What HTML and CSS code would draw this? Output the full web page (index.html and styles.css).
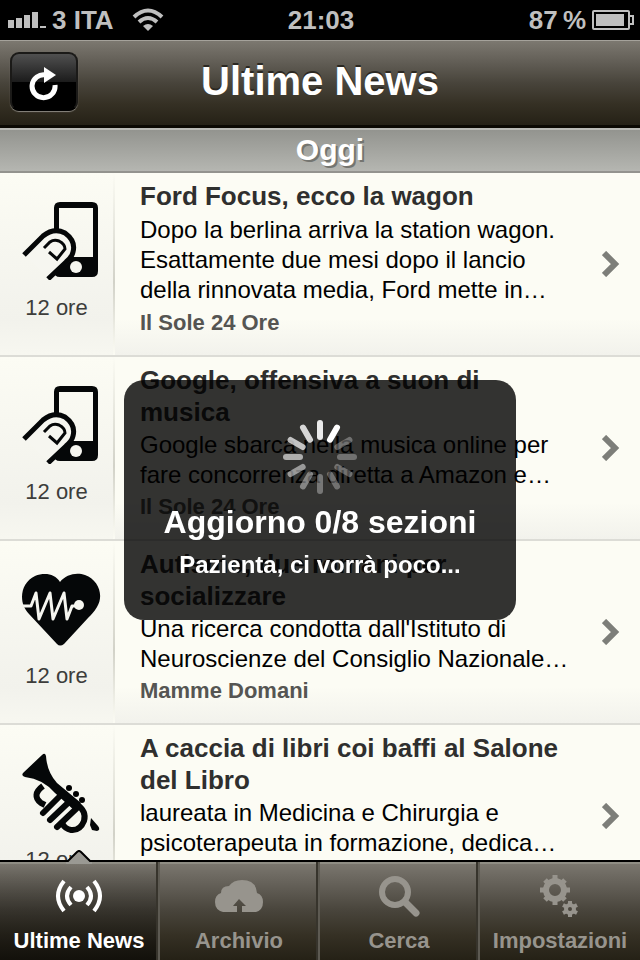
FILE: index.html
```html
<!DOCTYPE html>
<html lang="it">
<head>
    <meta charset="UTF-8">
    <meta name="viewport" content="width=device-width, initial-scale=1.0">
    <title>Ultime News</title>
    <link rel="stylesheet" href="styles.css">
</head>
<body>
    <div class="status-bar">
        <div class="status-left">
            <svg width="38" height="16" viewBox="0 0 38 16" fill="#bfbfbf"><path d="M0 8h6v8H0zM8 6h6v10H8zM16 3h6v13h-6zM24 0h6v16h-6zM32 14h6v2h-6z"/></svg>
            <span class="carrier">3 ITA</span>
            <svg width="32" height="24" viewBox="0 0 32 24" fill="none" stroke="#bfbfbf" stroke-width="4"><path d="M2 9q14-13 28 0M7 14q9-8 18 0"/><path d="M16 23l-5-5q5-4 10 0z" fill="#bfbfbf" stroke="none"/></svg>
        </div>
        <div class="clock">21:03</div>
        <div class="status-right">
            <span>87&thinsp;%</span>
            <svg width="42" height="20" viewBox="0 0 42 20"><rect x="1" y="1" width="36" height="18" rx="1" fill="none" stroke="#bfbfbf" stroke-width="2"/><path d="M4 4h28v12H4z" fill="#bfbfbf"/><path d="M38 6h3v8h-3" fill="none" stroke="#bfbfbf" stroke-width="2"/></svg>
        </div>
    </div>

    <header class="nav-bar">
        <button class="refresh" aria-label="Aggiorna">
            <svg width="30" height="34" viewBox="0 0 30 34"><path d="M17 8A11.500 11.500 0 1 0 26 18" fill="none" stroke="#fff" stroke-width="5"/><path d="M15 0l12 8-12 8z" fill="#fff"/></svg>
        </button>
        <h1>Ultime News</h1>
    </header>

    <h2 class="day">Oggi</h2>

    <main class="news">
        <article class="item">
            <div class="side">
                <svg width="80" height="80" viewBox="0 0 80 80"><use href="#touch"/></svg>
                <span>12 ore</span>
            </div>
            <div class="text">
                <h3>Ford Focus, ecco la wagon</h3>
                <p>Dopo la berlina arriva la station wagon.<br>Esattamente due mesi dopo il lancio<br>della rinnovata media, Ford mette in…</p>
                <div class="source">Il Sole 24 Ore</div>
            </div>
            <svg class="arrow" width="18" height="26" viewBox="0 0 18 26"><path d="M2 2l11 11L2 24"/></svg>
        </article>
        <article class="item">
            <div class="side">
                <svg width="80" height="80" viewBox="0 0 80 80"><use href="#touch"/></svg>
                <span>12 ore</span>
            </div>
            <div class="text">
                <h3>Google, offensiva a suon di<br>musica</h3>
                <p>Google sbarca nella musica online per<br>fare concorrenza diretta a Amazon e…</p>
                <div class="source">Il Sole 24 Ore</div>
            </div>
            <svg class="arrow" width="18" height="26" viewBox="0 0 18 26"><path d="M2 2l11 11L2 24"/></svg>
        </article>
        <article class="item">
            <div class="side">
                <svg width="80" height="80" viewBox="0 0 80 80">
                    <path d="M39 14C45 6 56 4 64 7C78 12 83 28 76 39C73 44 70 47 67 50L43 76Q39 79 36 76L8 46C-3 35-1 15 14 8C24 4 34 6 39 14z" fill="#050708"/>
                    <path d="M1 38h9l5-13 3 26 11-26 3 26 11-26 3 26 5-13h7" fill="none" stroke="#f6f6f0" stroke-width="3" stroke-linejoin="round"/>
                    <circle cx="58" cy="37" r="5" fill="#f6f6f0"/>
                </svg>
                <span>12 ore</span>
            </div>
            <div class="text">
                <h3>Autismo, due romani per<br>socializzare</h3>
                <p>Una ricerca condotta dall'Istituto di<br>Neuroscienze del Consiglio Nazionale…</p>
                <div class="source">Mamme Domani</div>
            </div>
            <svg class="arrow" width="18" height="26" viewBox="0 0 18 26"><path d="M2 2l11 11L2 24"/></svg>
        </article>
        <article class="item">
            <div class="side">
                <svg width="80" height="84" viewBox="0 0 80 84" class="tall">
                    <path d="M21 3Q24 0 25 4Q26 20 36 31L60 51L54 59L34 41Q22 27 4 25Q0 24 2 21z" fill="#050708"/>
                    <g fill="none" stroke="#050708" stroke-width="6">
                        <path d="M22 34Q10 43 20 51L24 53"/>
                        <path d="M22 61L41 42M29 68L48 50M36 75L56 56" stroke-linecap="round"/>
                        <path d="M55 52Q66 59 63 69Q59 79 50 78Q44 77 41 71"/>
                    </g>
                    <path d="M70 66L77 74Q80 78 76 79L71 78L69 73z" fill="#050708"/>
                    <circle cx="48" cy="36" r="3"/><circle cx="55" cy="42" r="3"/><circle cx="61" cy="48" r="3"/>
                </svg>
                <span>12 ore</span>
            </div>
            <div class="text">
                <h3>A caccia di libri coi baffi al Salone<br>del Libro</h3>
                <p>laureata in Medicina e Chirurgia e<br>psicoterapeuta in formazione, dedica…</p>
                <div class="source">Mamme Domani</div>
            </div>
            <svg class="arrow" width="18" height="26" viewBox="0 0 18 26"><path d="M2 2l11 11L2 24"/></svg>
        </article>
    </main>

    <nav class="tab-bar">
        <a href="#" class="tab active">
            <svg class="notch" width="26" height="14" viewBox="0 0 26 14"><path d="M0 14V12L11 2q2-1 4 0L26 12v2z" fill="#9a9993"/><path d="M0 11h2L11 2q2-2 4 0l9 9h2" fill="none" stroke="#000" stroke-width="2"/></svg>
            <svg width="48" height="42" viewBox="0 0 48 42" fill="none" stroke="#fff" stroke-width="4"><circle cx="24" cy="21" r="6" fill="#fff" stroke="none"/><path d="M16 12q-8 9 0 18M32 12q8 9 0 18M9 6q-12 15 0 30M39 6q12 15 0 30"/></svg>
            <span>Ultime News</span>
        </a>
        <a href="#" class="tab">
            <svg width="48" height="42" viewBox="0 0 48 42" fill="#97948d"><path d="M8 37Q0 35 0 27Q0 20 6 18Q6 11 14 11Q18 5 27 5Q41 5 42 18Q48 20 48 27Q48 35 41 37H27V31H31L24 24L18 31H22V37z"/></svg>
            <span>Archivio</span>
        </a>
        <a href="#" class="tab">
            <svg width="48" height="42" viewBox="0 0 48 42" fill="none" stroke="#97948d"><circle cx="20" cy="17" r="13" stroke-width="6"/><path d="M30 27l11 11" stroke-width="7" stroke-linecap="round"/></svg>
            <span>Cerca</span>
        </a>
        <a href="#" class="tab">
            <svg width="48" height="42" viewBox="0 0 48 42" fill="none" stroke="#97948d">
                <circle cx="19" cy="15" r="9" stroke-width="6"/><path d="M19 0v6M19 24v6M4 15h6M28 15h6M9 5l4 4M25 21l4 4M29 5l-4 4M13 21l-4 4" stroke-width="5"/>
                <circle cx="34" cy="34" r="4" stroke-width="4"/><path d="M34 26v4M34 38v4M27 30l4 2M37 36l4 2M41 30l-4 2M31 36l-4 2" stroke-width="4"/>
            </svg>
            <span>Impostazioni</span>
        </a>
    </nav>

    <div class="overlay">
        <div class="hud" role="status">
            <svg width="76" height="76" viewBox="-38 -38 76 76" stroke="#fff" stroke-width="6" stroke-linecap="round">
                <path d="M0-20v-14" opacity=".9"/>
                <path d="M0-20v-14" transform="rotate(30)"/>
                <path d="M0-20v-14" transform="rotate(60)" opacity=".3"/>
                <path d="M0-20v-14" transform="rotate(90)" opacity=".3"/>
                <path d="M0-20v-14" transform="rotate(120)" opacity=".3"/>
                <path d="M0-20v-14" transform="rotate(150)" opacity=".3"/>
                <path d="M0-20v-14" transform="rotate(180)" opacity=".33"/>
                <path d="M0-20v-14" transform="rotate(210)" opacity=".4"/>
                <path d="M0-20v-14" transform="rotate(240)" opacity=".5"/>
                <path d="M0-20v-14" transform="rotate(270)" opacity=".6"/>
                <path d="M0-20v-14" transform="rotate(300)" opacity=".7"/>
                <path d="M0-20v-14" transform="rotate(330)" opacity=".8"/>
            </svg>
            <strong>Aggiorno 0/8 sezioni</strong>
            <small>Pazienta, ci vorrà poco...</small>
        </div>
    </div>

    <svg width="0" height="0" class="defs">
        <symbol id="touch" viewBox="0 0 80 80">
            <path d="M39 2h32q6 0 6 6v63q0 6-6 6H39q-6 0-6-6V8q0-6 6-6zM38 8v49h34V8z" fill="#050708" fill-rule="evenodd"/>
            <path d="M3 55L22 36Q33 26 44 33Q56 42 53 54L49 61L28 79z" fill="#f6f6f0"/>
            <circle cx="55" cy="67" r="6" fill="#f6f6f0"/>
            <path d="M3 55L22 36Q33 27 44 33Q55 41 52 52Q51 57 45 62L27 79" fill="none" stroke="#050708" stroke-width="5"/>
            <path d="M23 48l6-6q4-3 9-1 6 3 6 8l-8 10-8-7" fill="none" stroke="#050708" stroke-width="3"/>
        </symbol>
    </svg>
</body>
</html>
```
FILE: styles.css
```css
* {
    box-sizing: border-box;
}
body {
    font-family: "Liberation Sans", Arial, sans-serif;
    margin: 0;
    height: 100vh;
    display: flex;
    flex-direction: column;
    overflow: hidden;
    background: #fcfcf4;
}
h1, h2, h3, p {
    margin: 0;
}
.status-bar {
    flex: none;
    display: grid;
    grid-template-columns: 1fr auto 1fr;
    align-items: center;
    height: 40px;
    padding: 0 6px 0 8px;
    background: #000;
    color: #bfbfbf;
    font-size: 26px;
    font-weight: bold;
}
.status-left, .status-right {
    display: flex;
    align-items: center;
    gap: 6px;
}
.status-right {
    justify-content: flex-end;
}
.carrier {
    margin-right: 12px;
}
.nav-bar {
    flex: none;
    display: grid;
    grid-template-columns: 68px 1fr 68px;
    align-items: center;
    height: 88px;
    padding: 0 10px 4px;
    background: linear-gradient(#7c7870, #625e56 25%, #48443b 50%, #353024 75%, #252116);
    border-top: 1px solid #a5a29b;
    border-bottom: 3px solid #0b0903;
}
.nav-bar h1 {
    text-align: center;
    font-size: 40px;
    line-height: 48px;
    color: #fff;
    text-shadow: 0 -2px 0 #2b2822;
}
.refresh {
    display: flex;
    align-items: center;
    justify-content: center;
    height: 59px;
    padding: 6px 0 0;
    border: 2px solid #1b1a18;
    border-bottom-color: #000;
    border-radius: 9px;
    background: linear-gradient(#505050, #1c1c1c 50%, #000 50%);
    box-shadow: 0 1px 1px #8b8881;
}
.day {
    flex: none;
    height: 45px;
    padding-left: 20px;
    line-height: 40px;
    text-align: center;
    font-size: 30px;
    color: #fff;
    text-shadow: 2px 2px 0 #747570;
    background: linear-gradient(#93948f, #b5b6b1);
    border-top: 2px solid #b9bab5;
    border-bottom: 2px solid #93938e;
}
.news {
    flex: 1;
    min-height: 0;
    overflow: hidden;
}
.item {
    display: flex;
    height: 184px;
    border-bottom: 2px solid #dcdcd6;
    background: linear-gradient(#fcfcf4 80%, #f2f2ec);
}
.side {
    flex: none;
    width: 115px;
    padding-top: 27px;
    display: flex;
    flex-direction: column;
    align-items: center;
    gap: 14px;
    font-size: 22px;
    line-height: 28px;
    color: #3d3d3b;
    background: linear-gradient(#fcfcf4, #f2f2ec 80%, #f7f7f0);
    border-right: 2px solid;
    border-image: linear-gradient(#fcfcf4, #d2d2c8 60%, #fcfcf4) 1;
}
.side svg {
    flex: none;
    margin-left: 8px;
}
.side .tall {
    margin-bottom: -4px;
}
.text {
    flex: 1;
    min-width: 0;
    display: flex;
    flex-direction: column;
    justify-content: space-between;
    padding: 7px 0 17px 25px;
    white-space: nowrap;
}
.text h3 {
    font-size: 26px;
    line-height: 32px;
    color: #2f2f2e;
}
.text p {
    font-size: 24px;
    line-height: 30px;
    color: #000;
}
.source {
    font-size: 22px;
    line-height: 30px;
    font-weight: bold;
    color: #555552;
}
.arrow {
    flex: none;
    align-self: center;
    margin-right: 20px;
    fill: none;
    stroke: #7d7e79;
    stroke-width: 6;
}
.tab-bar {
    flex: none;
    display: grid;
    grid-template-columns: repeat(4, 1fr);
    height: 100px;
    border-top: 2px solid #000;
    background: linear-gradient(#7c7870, #625e56 25%, #48443b 50%, #353024 75%, #252116);
    box-shadow: inset 0 2px 0 #8f8d84;
}
.tab {
    position: relative;
    display: flex;
    flex-direction: column;
    align-items: center;
    gap: 10px;
    padding-top: 13px;
    color: #97948d;
    font-size: 22px;
    line-height: 28px;
    font-weight: bold;
    text-decoration: none;
    border-right: 2px solid #5d5a52;
    box-shadow: inset -2px 0 0 #37342c;
}
.tab:last-child {
    border-right: 0;
    box-shadow: none;
}
.active {
    color: #fff;
    background: linear-gradient(transparent, rgba(0, 0, 0, 0.5));
}
.notch {
    position: absolute;
    top: -12px;
    left: calc(50% - 13px);
}
.overlay {
    position: fixed;
    inset: 40px 0 0;
    display: flex;
    align-items: center;
    justify-content: center;
}
.hud {
    display: flex;
    flex-direction: column;
    align-items: center;
    padding: 39px 40px;
    border-radius: 20px;
    background: rgba(0, 0, 0, 0.8);
    color: #fff;
}
.hud strong {
    margin-top: 8px;
    font-size: 32px;
    line-height: 38px;
}
.hud small {
    margin-top: 8px;
    font-size: 24px;
    line-height: 32px;
    font-weight: bold;
}
.defs {
    position: absolute;
}
```
